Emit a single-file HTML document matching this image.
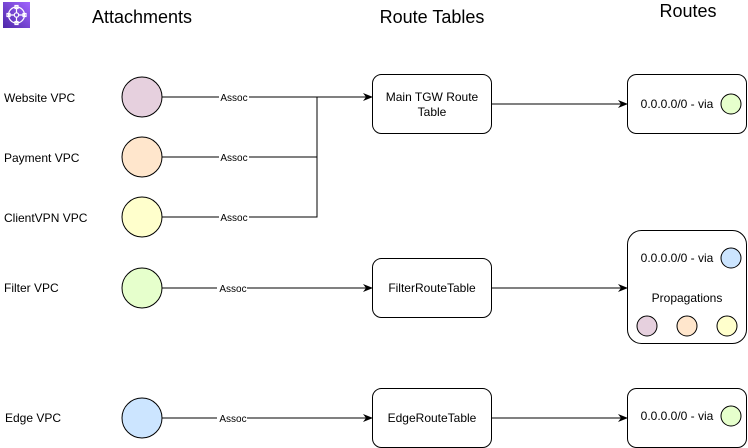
<!DOCTYPE html>
<html><head><style>html,body{margin:0;padding:0;background:#fff;width:748px;height:448px;overflow:hidden}</style></head>
<body>
<svg width="748" height="448" viewBox="0 0 748 448" xmlns="http://www.w3.org/2000/svg" font-family="Liberation Sans, Arial, sans-serif">
<defs>
<linearGradient id="g" x1="0" y1="1" x2="1" y2="0"><stop offset="0" stop-color="#4d27a8"/><stop offset="1" stop-color="#a166ff"/></linearGradient>
<marker id="a" markerWidth="10" markerHeight="8" refX="9" refY="4" orient="auto" markerUnits="userSpaceOnUse"><path d="M0,0 L10,4 L0,8 L3,4 Z" fill="#000"/></marker>
</defs>
<rect x="3" y="2" width="27" height="26" fill="url(#g)"/>
<g stroke="#fff" stroke-width="1.2" fill="none">
<circle cx="16.5" cy="15" r="8"/><circle cx="16.5" cy="15" r="2.2"/>
<path d="M16.5 7v5.8M16.5 17.2V23M8.5 15h5.8M18.7 15h5.8"/>
<rect x="15" y="5.5" width="3" height="3"/><rect x="15" y="21.5" width="3" height="3"/><rect x="7" y="13.5" width="3" height="3"/><rect x="23" y="13.5" width="3" height="3"/>
</g>
<g font-size="18" text-anchor="middle"><text x="142" y="23">Attachments</text><text x="432" y="23">Route Tables</text><text x="688" y="17">Routes</text></g>
<g font-size="12"><text x="4" y="102">Website VPC</text><text x="4" y="162">Payment VPC</text><text x="4" y="222">ClientVPN VPC</text><text x="4" y="292">Filter VPC</text><text x="5" y="422">Edge VPC</text></g>
<g stroke="#000" stroke-width="1" fill="none">
<path d="M162 97H372" marker-end="url(#a)"/>
<path d="M162 157H317V97M162 217H317V157"/>
<path d="M162 288H372" marker-end="url(#a)"/>
<path d="M162 418H372" marker-end="url(#a)"/>
<path d="M491 104H627" marker-end="url(#a)"/>
<path d="M491 288H627" marker-end="url(#a)"/>
<path d="M491 418H627" marker-end="url(#a)"/>
</g>
<g stroke="#000" stroke-width="1">
<circle cx="142" cy="97" r="20" fill="#e6d0de"/>
<circle cx="142" cy="157" r="20" fill="#ffe6cc"/>
<circle cx="142" cy="217" r="20" fill="#ffffcc"/>
<circle cx="142" cy="288" r="20" fill="#e6ffcc"/>
<circle cx="142" cy="418" r="20" fill="#cce5ff"/>
</g>
<g font-size="10" text-anchor="middle" fill="#000">
<rect x="219" y="91" width="30" height="12" fill="#fff"/><text x="234" y="101">Assoc</text>
<rect x="219" y="151" width="30" height="12" fill="#fff"/><text x="234" y="161">Assoc</text>
<rect x="219" y="211" width="30" height="12" fill="#fff"/><text x="234" y="221">Assoc</text>
<rect x="217" y="282" width="30" height="12" fill="#fff"/><text x="233" y="292">Assoc</text>
<rect x="217" y="412" width="30" height="12" fill="#fff"/><text x="233" y="422">Assoc</text>
</g>
<g stroke="#000" stroke-width="1" fill="#fff">
<rect x="372.5" y="74.5" width="119" height="59" rx="9"/>
<rect x="372.5" y="258.5" width="119" height="59" rx="9"/>
<rect x="372.5" y="388.5" width="119" height="59" rx="9"/>
<rect x="627.5" y="74.5" width="119" height="59" rx="9"/>
<rect x="627.5" y="230.5" width="119" height="113" rx="14"/>
<rect x="627.5" y="388.5" width="119" height="59" rx="9"/>
</g>
<g font-size="12" text-anchor="middle">
<text x="432" y="101">Main TGW Route</text><text x="432" y="116">Table</text>
<text x="432" y="292">FilterRouteTable</text>
<text x="432" y="422">EdgeRouteTable</text>
<text x="677" y="108">0.0.0.0/0 - via</text>
<text x="677" y="262">0.0.0.0/0 - via</text>
<text x="687" y="302">Propagations</text>
<text x="677" y="420">0.0.0.0/0 - via</text>
</g>
<g stroke="#000" stroke-width="1">
<circle cx="731" cy="104" r="10" fill="#e6ffcc"/>
<circle cx="731" cy="258" r="10" fill="#cce5ff"/>
<circle cx="647" cy="326" r="10" fill="#e6d0de"/>
<circle cx="687" cy="326" r="10" fill="#ffe6cc"/>
<circle cx="727" cy="326" r="10" fill="#ffffcc"/>
<circle cx="731" cy="416" r="10" fill="#e6ffcc"/>
</g>
</svg>
</body></html>
